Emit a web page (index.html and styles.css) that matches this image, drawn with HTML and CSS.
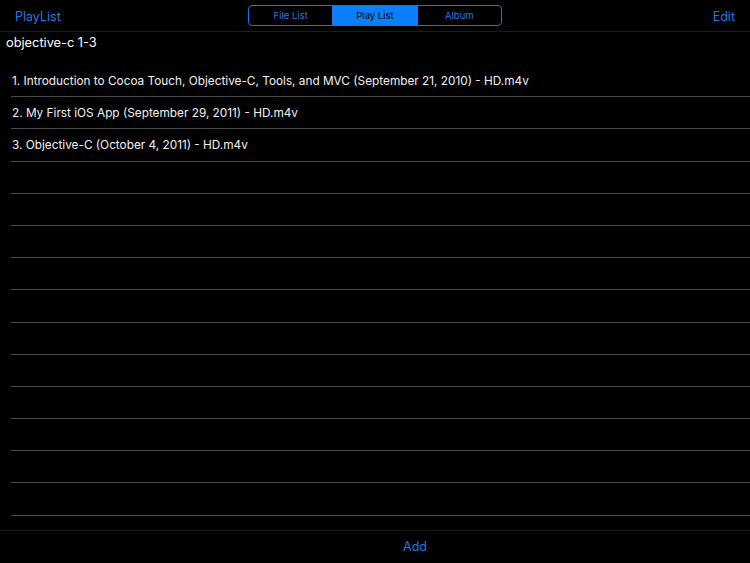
FILE: index.html
```html
<!DOCTYPE html>
<html>
  <head>
    <title>PlayList</title>
    <link rel="stylesheet" href="styles.css">
  </head>
  <body>
    <div class="navbar">
      <span class="nav-btn">PlayList</span>
      <div class="segmented">
        <span class="segment">File List</span>
        <span class="segment selected">Play List</span>
        <span class="segment">Album</span>
      </div>
      <span class="nav-btn right">Edit</span>
    </div>
    <div class="title">objective-c 1-3</div>
    <div class="list">
      <div class="row">1. Introduction to Cocoa Touch, Objective-C, Tools, and MVC (September 21, 2010) - HD.m4v</div>
      <div class="row">2. My First iOS App (September 29, 2011) - HD.m4v</div>
      <div class="row">3. Objective-C (October 4, 2011) - HD.m4v</div>
      <div class="row"></div>
      <div class="row"></div>
      <div class="row"></div>
      <div class="row"></div>
      <div class="row"></div>
      <div class="row"></div>
      <div class="row"></div>
      <div class="row"></div>
      <div class="row"></div>
      <div class="row"></div>
      <div class="row"></div>
    </div>
    <div class="toolbar">
      <span class="nav-btn">Add</span>
    </div>
  </body>
</html>
```

FILE: styles.css
```css
html, body {
  margin: 0;
  height: 100%;
}

body {
  font-family: Inter, "Noto Sans", sans-serif;
  background-color: #000;
  color: #fff;
  display: flex;
  flex-direction: column;
  overflow: hidden;
}

.navbar {
  height: 32px;
  display: grid;
  grid-template-columns: 1fr auto 1fr;
  align-items: center;
  padding: 1px 15px 0;
  border-bottom: 1px solid #1c1c1c;
  box-sizing: border-box;
}

.nav-btn {
  color: #1f7ae0;
  font-size: 12.5px;
}

.nav-btn.right {
  justify-self: end;
}

.segmented {
  display: flex;
  width: 254px;
  height: 21px;
  border: 1px solid #1c72d8;
  border-radius: 4px;
  overflow: hidden;
  box-sizing: border-box;
  margin-top: -2px;
}

.segment {
  flex: 1;
  display: flex;
  align-items: center;
  justify-content: center;
  font-size: 9.5px;
  color: #1f7ae0;
  border-left: 1px solid #1c72d8;
}

.segment:first-child {
  border-left: none;
}

.segment.selected {
  background: #0a80ff;
  color: #000;
}

.title {
  height: 33px;
  padding: 3px 0 0 6px;
  font-size: 12.8px;
  box-sizing: border-box;
}

.list {
  flex: 1;
  padding-left: 11px;
}

.row {
  height: 32.2px;
  box-sizing: border-box;
  border-bottom: 1px solid #4a4a4a;
  display: flex;
  align-items: center;
  padding: 0 1px;
  font-size: 11.8px;
  color: #f2f2f2;
}

.toolbar {
  height: 33px;
  border-top: 1px solid #1c1c1c;
  display: flex;
  align-items: center;
  justify-content: center;
  padding: 0 0 2px 80px;
  box-sizing: border-box;
}
```
